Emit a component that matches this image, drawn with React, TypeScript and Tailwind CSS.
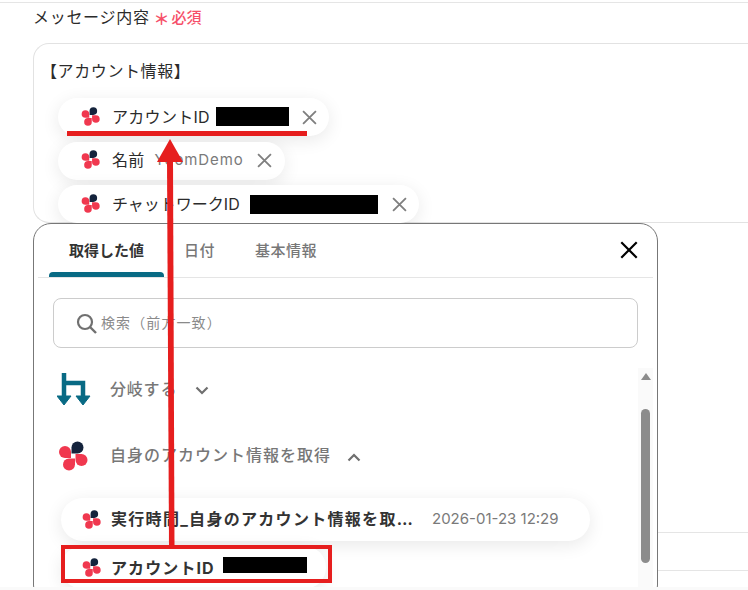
const font = { fontFamily: '"Inter", "Noto Sans CJK JP", sans-serif' };

function Logo({ size = 19 }: { size?: number }) {
  const petal = "M-6 6V0A6 6 0 1 1 0 6Z";
  return (
    <svg width={size} height={size} viewBox="0 0 30 30" className="shrink-0">
      <path d={petal} fill="#14233c" transform="translate(19.5 6.5)" />
      <path d={petal} fill="#f0384f" transform="translate(7 11) rotate(-90)" />
      <path d={petal} fill="#f0384f" transform="translate(23.5 19) rotate(90)" />
      <path d={petal} fill="#f0384f" transform="translate(11 23.5) rotate(180)" />
    </svg>
  );
}

function Cross({ size = 14, color = "#7f7f7f" }: { size?: number; color?: string }) {
  return (
    <svg width={size} height={size} viewBox="0 0 14 14" className="shrink-0">
      <path d="M1 1L13 13M13 1L1 13" stroke={color} strokeWidth="1.7" fill="none" />
    </svg>
  );
}

function Chip({ children, width }: { children: React.ReactNode; width: string }) {
  return (
    <div className={`flex h-[38px] items-center rounded-full bg-white pl-[23px] shadow-[0_4px_18px_rgba(0,0,0,0.09)] ${width}`}>
      <span className="-mt-[2px]"><Logo /></span>
      {children}
    </div>
  );
}

export default function App() {
  return (
    <div className="relative h-[590px] w-[748px] overflow-hidden bg-white text-[#2b2b2b]" style={font}>
      <div className="mt-[2px] border-t border-[#e5e5e5] pl-[33px]">
        <div className="flex h-[27px] items-center">
          <span className="text-[16px] tracking-[0.7px]">メッセージ内容</span>
          <span className="ml-[4px] mt-[4px] flex items-center text-[#f6506a]">
            <span className="text-[16px] font-bold leading-none">＊</span>
            <span className="ml-[2px] text-[15px] font-medium">必須</span>
          </span>
        </div>
        <div className="mt-[13px] h-[180px] rounded-l-[16px] border border-r-0 border-[#e2e2e2] pl-[7px] pt-[15px]">
          <div className="text-[16px] leading-[24px] tracking-[0.6px]">【アカウント情報】</div>
          <div className="mt-[15px] flex flex-col items-start gap-[5.5px] pl-[17px]">
            <Chip width="w-[271px]">
              <span className="-mt-[1px] ml-[12px] text-[16px] tracking-[0.3px]">アカウントID</span>
              <span className="-mt-[2px] ml-[6px] h-[19px] w-[73px] bg-black" />
              <span className="ml-[13px]"><Cross size={15} /></span>
            </Chip>
            <Chip width="w-[227px]">
              <span className="-mt-[1px] ml-[12px] text-[16px] tracking-[0.3px]">名前</span>
              <span className="ml-[10px] w-[90px] text-[15px] tracking-[0.9px] text-[#7a7a7a]">YoomDemo</span>
              <span className="ml-[12px]"><Cross size={15} /></span>
            </Chip>
            <Chip width="w-[361px]">
              <span className="-mt-[1px] ml-[12px] text-[16px]">チャットワークID</span>
              <span className="ml-[10px] h-[19px] w-[128px] bg-black" />
              <span className="ml-[14px]"><Cross size={15} /></span>
            </Chip>
          </div>
        </div>
      </div>
      <div className="ml-[658px] mt-[309px] border-t border-[#e5e5e5]" />
      <div className="ml-[658px] mt-[37px] border-t border-[#e5e5e5]" />

      {/* variable picker */}
      <div className="absolute left-[33px] top-[223px] h-[380px] w-[625px] rounded-[18px] border border-[#777] bg-white">
        <div className="mx-[4px] flex h-[54px] items-start border-b border-[#e5e5e5] pl-[11px]">
          <div className="relative h-[53px] w-[115px] pt-[16px] text-center text-[15px] font-bold leading-[22px] text-[#333]">
            取得した値
            <div className="absolute bottom-0 left-0 h-[5px] w-full rounded-t-[4px] bg-[#086a84]" />
          </div>
          <div className="ml-[20px] pt-[16px] text-[15px] font-medium leading-[22px] tracking-[0.5px] text-[#777]">日付</div>
          <div className="ml-[40px] pt-[16px] text-[15px] font-medium leading-[22px] tracking-[0.5px] text-[#777]">基本情報</div>
          <div className="ml-auto mr-[15px] mt-[17px]"><Cross size={18} color="#000" /></div>
        </div>
        <div className="mx-[19px] mt-[20px] flex h-[50px] items-center rounded-[8px] border border-[#cccccc] pl-[22px]">
          <svg width="21" height="21" viewBox="0 0 21 21" className="shrink-0">
            <circle cx="9" cy="9" r="7" stroke="#707070" strokeWidth="2.2" fill="none" />
            <path d="M14 14L20 20" stroke="#707070" strokeWidth="2.4" />
          </svg>
          <span className="-mt-[1px] ml-[4px] text-[14px] tracking-[1.1px] text-[#8a8a8a]">検索（前方一致）</span>
        </div>
        <div className="relative pl-[23px] pt-[25px]">
          <div className="flex h-[32px] items-center">
            <svg width="34" height="33" viewBox="0 0 34 33" className="shrink-0">
              <path d="M7 0V26M5 10H26V26" stroke="#086a84" strokeWidth="4.500" fill="none" />
              <path d="M0 23H14L7 32ZM19 23H33L26 32Z" fill="#086a84" stroke="#086a84" strokeLinejoin="round" />
            </svg>
            <span className="ml-[19px] text-[16px] font-medium tracking-[0.8px] text-[#777]">分岐する</span>
            <svg width="14" height="9" viewBox="0 0 14 9" className="ml-[18px] mt-[2px]">
              <path d="M1.500 1.500L7 7L12.500 1.500" stroke="#6f6f6f" strokeWidth="2.200" fill="none" />
            </svg>
          </div>
          <div className="mt-[35px] flex h-[32px] items-center pl-[1px]">
            <Logo size={30} />
            <span className="-mt-[2px] ml-[22px] text-[16px] font-medium tracking-[1px] text-[#777]">自身のアカウント情報を取得</span>
            <svg width="14" height="9" viewBox="0 0 14 9" className="ml-[16px] mt-[2px]">
              <path d="M1.500 7.500L7 2L12.500 7.500" stroke="#6f6f6f" strokeWidth="2.200" fill="none" />
            </svg>
          </div>
          <div className="ml-[4px] mt-[26px] flex flex-col items-start gap-[5px]">
            <div className="flex h-[43px] w-[529px] items-center rounded-full bg-white pl-[21px] shadow-[0_4px_18px_rgba(0,0,0,0.09)]">
              <Logo />
              <span className="-mt-[1px] ml-[10px] w-[305px] whitespace-nowrap text-[16px] font-bold tracking-[1.3px] text-[#333]">実行時間_自身のアカウント情報を取…</span>
              <span className="-mt-[1px] ml-[16px] text-[15px] text-[#7a7a7a]">2026-01-23 12:29</span>
            </div>
            <div className="flex h-[43px] w-[265px] items-center rounded-full bg-white pl-[21px] shadow-[0_4px_18px_rgba(0,0,0,0.09)]">
              <Logo />
              <span className="ml-[10px] text-[16px] font-bold tracking-[1.1px] text-[#333]">アカウントID</span>
              <span className="-mt-[6px] ml-[8px] h-[16px] w-[84px] bg-black" />
            </div>
          </div>
          {/* scrollbar */}
          <div className="absolute right-[4px] top-[20px] flex h-[219px] w-[15px] flex-col items-center bg-[#fafafa] pt-[5px]">
            <div className="h-0 w-0 border-x-[5px] border-b-[7px] border-x-transparent border-b-[#8c8c8c]" />
            <div className="mt-[29px] h-[154px] w-[9px] rounded-full bg-[#8c8c8c]" />
          </div>
        </div>
      </div>

      {/* red annotations */}
      <div className="absolute left-[67px] top-[131px] h-[5px] w-[240px] bg-[#e61e1e]" />
      <svg width="748" height="590" viewBox="0 0 748 590" className="absolute left-0 top-0">
        <path d="M167 160H173L174.500 546H169Z" fill="#e61e1e" />
        <path d="M170 139L183 162H157Z" fill="#e61e1e" />
      </svg>
      <div className="absolute left-[61px] top-[545px] h-[38px] w-[271px] border-[4px] border-[#e61e1e]" />

      <div className="absolute bottom-0 left-0 h-[3px] w-full bg-[#fafafa]" />
    </div>
  );
}
